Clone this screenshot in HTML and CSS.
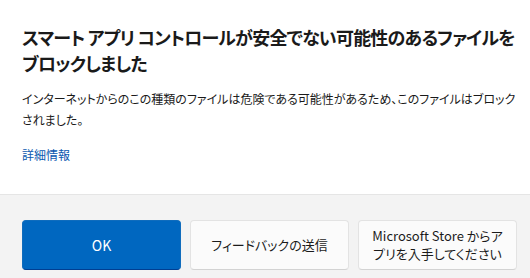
FILE: index.html
```html
<!DOCTYPE html>
<html lang="ja">
<head>
<meta charset="utf-8">
<link rel="stylesheet" href="styles.css">
</head>
<body>
<div class="dialog">
  <div class="content">
    <h1 class="title">スマート アプリ コントロールが安全でない可能性のあるファイルをブロックしました</h1>
    <p class="desc">インターネットからのこの種類のファイルは危険である可能性があるため、このファイルはブロックされました。</p>
    <a class="link" href="#">詳細情報</a>
  </div>
  <div class="footer">
    <button class="btn primary">OK</button>
    <button class="btn">フィードバックの送信</button>
    <button class="btn">Microsoft Store からア<br>プリを入手してください</button>
  </div>
</div>
</body>
</html>
```

FILE: styles.css
```css
html, body {
  margin: 0;
  padding: 0;
  background: #ffffff;
}
body {
  font-family: "Noto Sans CJK JP", "Noto Sans", sans-serif;
  font-feature-settings: "palt";
  color: #1b1b1b;
}
.dialog {
  width: 530px;
  height: 278px;
  display: flex;
  flex-direction: column;
  overflow: hidden;
}
.content {
  padding: 24px 8px 0 22px;
  height: 195px;
  box-sizing: border-box;
  border-bottom: 1px solid #e5e5e5;
}
.title {
  margin: 0;
  font-size: 18px;
  font-weight: 700;
  letter-spacing: -0.8px;
  line-height: 26px;
  color: #1a1a1a;
}
.desc {
  margin: 12px 0 0 0;
  font-size: 12px;
  line-height: 21px;
  color: #1a1a1a;
}
.link {
  display: inline-block;
  margin-top: 15px;
  font-size: 12px;
  line-height: 20px;
  color: #0a58b0;
  text-decoration: none;
}
.footer {
  flex: 1;
  background: #f3f3f3;
  display: flex;
  gap: 9px;
  padding: 25px 13px 0 22px;
  box-sizing: border-box;
}
.btn {
  width: 159px;
  height: 50px;
  box-sizing: border-box;
  border: 1px solid #e3e3e3;
  border-bottom-color: #d3d3d3;
  border-radius: 4px;
  background: #fbfbfb;
  font-family: "Noto Sans CJK JP", "Noto Sans", sans-serif;
  font-feature-settings: "palt";
  font-size: 13px;
  line-height: 18px;
  color: #1b1b1b;
  padding: 0 8px;
}
.btn.primary {
  background: #0067c0;
  border-color: #0f6cbd;
  border-bottom-color: #003e92;
  color: #ffffff;
  font-size: 14px;
}
```
